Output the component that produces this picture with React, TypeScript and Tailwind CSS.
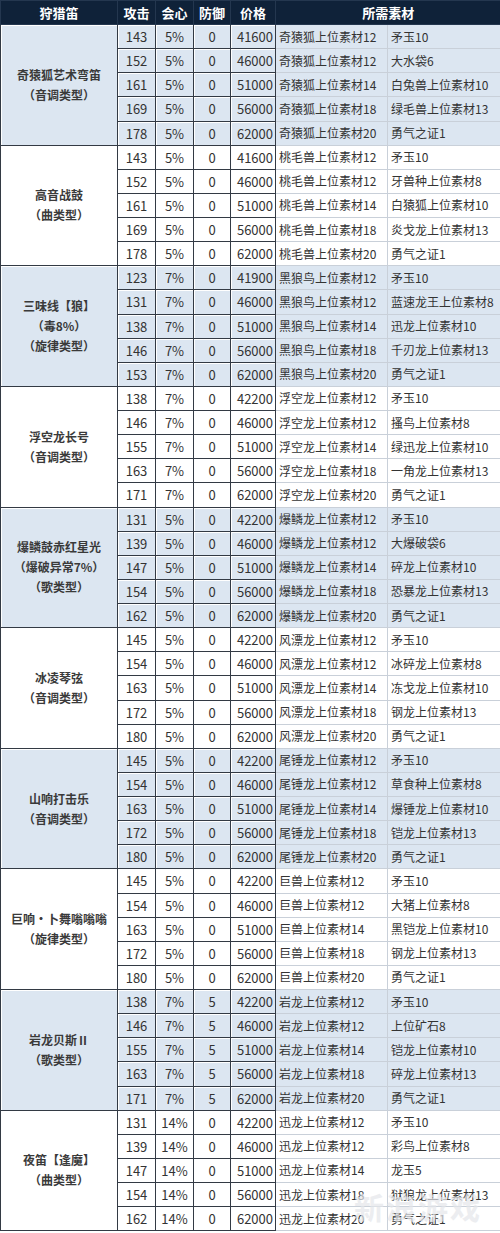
import React from "react";

type Row = [string, string, string, string, string, string];

type Group = {
  name: string[];
  rows: Row[];
};

const groups: Group[] = [
  {
    name: ["奇猿狐艺术弯笛", "（音调类型）"],
    rows: [
      ["143", "5%", "0", "41600", "奇猿狐上位素材12", "矛玉10"],
      ["152", "5%", "0", "46000", "奇猿狐上位素材12", "大水袋6"],
      ["161", "5%", "0", "51000", "奇猿狐上位素材14", "白兔兽上位素材10"],
      ["169", "5%", "0", "56000", "奇猿狐上位素材18", "绿毛兽上位素材13"],
      ["178", "5%", "0", "62000", "奇猿狐上位素材20", "勇气之证1"],
    ],
  },
  {
    name: ["高音战鼓", "（曲类型）"],
    rows: [
      ["143", "5%", "0", "41600", "桃毛兽上位素材12", "矛玉10"],
      ["152", "5%", "0", "46000", "桃毛兽上位素材12", "牙兽种上位素材8"],
      ["161", "5%", "0", "51000", "桃毛兽上位素材14", "白猿狐上位素材10"],
      ["169", "5%", "0", "56000", "桃毛兽上位素材18", "炎戈龙上位素材13"],
      ["178", "5%", "0", "62000", "桃毛兽上位素材20", "勇气之证1"],
    ],
  },
  {
    name: ["三味线【狼】", "（毒8%）", "（旋律类型）"],
    rows: [
      ["123", "7%", "0", "41900", "黑狼鸟上位素材12", "矛玉10"],
      ["131", "7%", "0", "46000", "黑狼鸟上位素材12", "蓝速龙王上位素材8"],
      ["138", "7%", "0", "51000", "黑狼鸟上位素材14", "迅龙上位素材10"],
      ["146", "7%", "0", "56000", "黑狼鸟上位素材18", "千刃龙上位素材13"],
      ["153", "7%", "0", "62000", "黑狼鸟上位素材20", "勇气之证1"],
    ],
  },
  {
    name: ["浮空龙长号", "（音调类型）"],
    rows: [
      ["138", "7%", "0", "42200", "浮空龙上位素材12", "矛玉10"],
      ["146", "7%", "0", "46000", "浮空龙上位素材12", "搔鸟上位素材8"],
      ["155", "7%", "0", "51000", "浮空龙上位素材14", "绿迅龙上位素材10"],
      ["163", "7%", "0", "56000", "浮空龙上位素材18", "一角龙上位素材13"],
      ["171", "7%", "0", "62000", "浮空龙上位素材20", "勇气之证1"],
    ],
  },
  {
    name: ["爆鳞鼓赤红星光", "（爆破异常7%）", "（歌类型）"],
    rows: [
      ["131", "5%", "0", "42200", "爆鳞龙上位素材12", "矛玉10"],
      ["139", "5%", "0", "46000", "爆鳞龙上位素材12", "大爆破袋6"],
      ["147", "5%", "0", "51000", "爆鳞龙上位素材14", "碎龙上位素材10"],
      ["154", "5%", "0", "56000", "爆鳞龙上位素材18", "恐暴龙上位素材13"],
      ["162", "5%", "0", "62000", "爆鳞龙上位素材20", "勇气之证1"],
    ],
  },
  {
    name: ["冰凌琴弦", "（音调类型）"],
    rows: [
      ["145", "5%", "0", "42200", "风漂龙上位素材12", "矛玉10"],
      ["154", "5%", "0", "46000", "风漂龙上位素材12", "冰碎龙上位素材8"],
      ["163", "5%", "0", "51000", "风漂龙上位素材14", "冻戈龙上位素材10"],
      ["172", "5%", "0", "56000", "风漂龙上位素材18", "钢龙上位素材13"],
      ["180", "5%", "0", "62000", "风漂龙上位素材20", "勇气之证1"],
    ],
  },
  {
    name: ["山响打击乐", "（音调类型）"],
    rows: [
      ["145", "5%", "0", "42200", "尾锤龙上位素材12", "矛玉10"],
      ["154", "5%", "0", "46000", "尾锤龙上位素材12", "草食种上位素材8"],
      ["163", "5%", "0", "51000", "尾锤龙上位素材14", "爆锤龙上位素材10"],
      ["172", "5%", "0", "56000", "尾锤龙上位素材18", "铠龙上位素材13"],
      ["180", "5%", "0", "62000", "尾锤龙上位素材20", "勇气之证1"],
    ],
  },
  {
    name: ["巨响・卜舞嗡嗡嗡", "（旋律类型）"],
    rows: [
      ["145", "5%", "0", "42200", "巨兽上位素材12", "矛玉10"],
      ["154", "5%", "0", "46000", "巨兽上位素材12", "大猪上位素材8"],
      ["163", "5%", "0", "51000", "巨兽上位素材14", "黑铠龙上位素材10"],
      ["172", "5%", "0", "56000", "巨兽上位素材18", "钢龙上位素材13"],
      ["180", "5%", "0", "62000", "巨兽上位素材20", "勇气之证1"],
    ],
  },
  {
    name: ["岩龙贝斯Ⅱ", "（歌类型）"],
    rows: [
      ["138", "7%", "5", "42200", "岩龙上位素材12", "矛玉10"],
      ["146", "7%", "5", "46000", "岩龙上位素材12", "上位矿石8"],
      ["155", "7%", "5", "51000", "岩龙上位素材14", "铠龙上位素材10"],
      ["163", "7%", "5", "56000", "岩龙上位素材18", "碎龙上位素材13"],
      ["171", "7%", "5", "62000", "岩龙上位素材20", "勇气之证1"],
    ],
  },
  {
    name: ["夜笛【逢魔】", "（曲类型）"],
    rows: [
      ["131", "14%", "0", "42200", "迅龙上位素材12", "矛玉10"],
      ["139", "14%", "0", "46000", "迅龙上位素材12", "彩鸟上位素材8"],
      ["147", "14%", "0", "51000", "迅龙上位素材14", "龙玉5"],
      ["154", "14%", "0", "56000", "迅龙上位素材18", "狱狼龙上位素材13"],
      ["162", "14%", "0", "62000", "迅龙上位素材20", "勇气之证1"],
    ],
  },
];

const numCell =
  "border border-[#333a44] shadow-[inset_1px_1px_0_#ffffff] text-center p-0";

export default function App() {
  return (
    <div
      className="relative w-[500px] bg-white text-[#333] overflow-hidden"
      style={{ fontFamily: '"Noto Sans CJK SC", "Liberation Sans", sans-serif' }}
    >
      <table className="w-[500px] table-fixed border-collapse text-[13px] leading-none">
        <colgroup>
          <col className="w-[117px]" />
          <col className="w-[38px]" />
          <col className="w-[38px]" />
          <col className="w-[37px]" />
          <col className="w-[45px]" />
          <col className="w-[112px]" />
          <col className="w-[113px]" />
        </colgroup>
        <thead>
          <tr className="h-[24px] bg-[#0f2239] text-white font-bold">
            <th className="border border-[#24374f] font-bold">狩猎笛</th>
            <th className="border border-[#24374f] font-bold">攻击</th>
            <th className="border border-[#24374f] font-bold">会心</th>
            <th className="border border-[#24374f] font-bold">防御</th>
            <th className="border border-[#24374f] font-bold">价格</th>
            <th colSpan={2} className="border-y border-[#24374f] font-bold">
              所需素材
            </th>
          </tr>
        </thead>
        <tbody>
          {groups.map((group, gi) => {
            const bg = gi % 2 === 0 ? "bg-[#dce6f1]" : "bg-white";
            return group.rows.map((row, ri) => (
              <tr key={`${gi}-${ri}`} className={`h-[24.14px] ${bg}`}>
                {ri === 0 && (
                  <td
                    rowSpan={5}
                    className="border border-[#333a44] shadow-[inset_1px_1px_0_#ffffff] text-center font-bold text-[12px] leading-[20px] text-[#3a3a3a]"
                  >
                    {group.name.map((line) => (
                      <div key={line}>{line}</div>
                    ))}
                  </td>
                )}
                <td className={numCell}>{row[0]}</td>
                <td className={numCell}>{row[1]}</td>
                <td className={numCell}>{row[2]}</td>
                <td className={`${numCell} !text-right pr-[2px]`}>{row[3]}</td>
                <td className="border-y border-l border-[#c9d0d9] border-l-[#333a44] pl-[3px] whitespace-nowrap text-[12px]">
                  {row[4]}
                </td>
                <td className="border-y border-l border-[#c9d0d9] border-l-dotted pl-[3px] whitespace-nowrap text-[12px]">
                  {row[5]}
                </td>
              </tr>
            ));
          })}
        </tbody>
      </table>
      <div className="pointer-events-none absolute right-[18px] bottom-[2px] text-[30px] font-bold tracking-[2px] text-[#e4e6ea] opacity-70">
        新浪游戏
      </div>
    </div>
  );
}
